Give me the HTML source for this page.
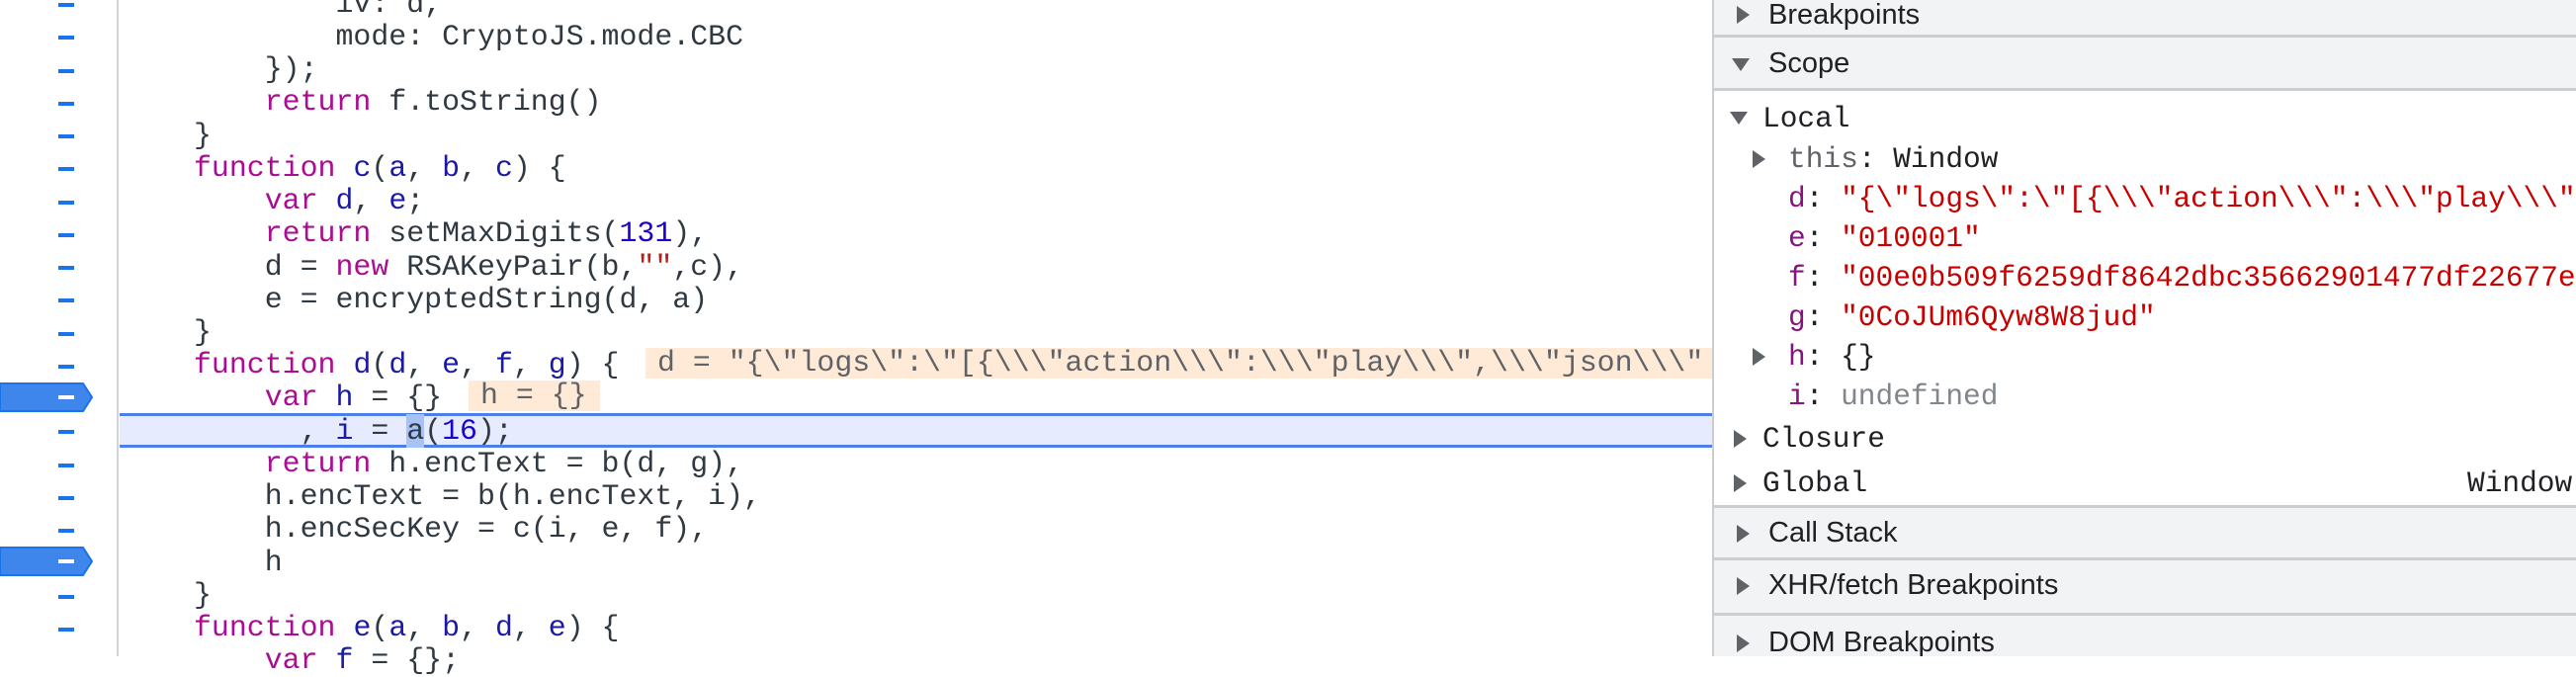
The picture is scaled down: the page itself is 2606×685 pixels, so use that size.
<!DOCTYPE html>
<html><head><meta charset="utf-8"><style>
*{margin:0;padding:0;box-sizing:border-box}
body{width:2606px;height:664px;overflow:hidden;background:#fff;position:relative;font-family:"Liberation Mono",monospace}
.gut{position:absolute;left:0;top:0;width:120px;height:664px;background:#fff;border-right:2px solid #d0d3d8}
.dash{position:absolute;left:59px;width:16px;height:4px;background:#1a73e8}
.bp{position:absolute;left:0;width:95px;height:30px}
.ln{position:absolute;left:196px;height:33px;line-height:33px;font-size:29.9px;white-space:pre;color:#303942}
.k{color:#aa0d91}.v{color:#1a1aa6}.n{color:#1c00cf}.s{color:#c41a16}
.hl{position:absolute;left:121px;width:1611px;top:418px;height:35px;background:#e6ecfd;border-top:3px solid #4b7ff0;border-bottom:3px solid #4b7ff0}
.iv{position:absolute;height:31px;background:#feead7;color:#5f6368;font-size:29.9px;line-height:31px;white-space:pre;overflow:hidden;padding-left:12px}
.panel{position:absolute;left:1732px;top:0;width:874px;height:664px;border-left:2px solid #cbcdd1;background:#fff;overflow:hidden}
.hd{position:absolute;left:0;width:874px;background:#f1f3f4;border-bottom:3px solid #cbcdd1;font-family:"Liberation Sans",sans-serif;font-size:29px;color:#202124}
.hd span{position:absolute;left:55px}
.tri{position:absolute;width:0;height:0}
.tr{border-top:9px solid transparent;border-bottom:9px solid transparent;border-left:13px solid #5f6368}
.td{border-left:9px solid transparent;border-right:9px solid transparent;border-top:13px solid #5f6368}
.sr{position:absolute;font-size:29.5px;white-space:pre;line-height:36px;color:#202124}
.p{color:#881280}.st{color:#c80000}.u{color:#80868b}
</style></head><body>
<div class="gut"></div>
<div class="hl"></div>
<div id="dashes"></div>
<svg class="bp" style="top:387px" viewBox="0 0 95 30"><path d="M0 1H84L93 15L84 29H0Z" fill="#3f86ec" stroke="#1a73e8" stroke-width="2"/><rect x="59" y="13" width="16" height="4" fill="#fff"/></svg>
<svg class="bp" style="top:553px" viewBox="0 0 95 30"><path d="M0 1H84L93 15L84 29H0Z" fill="#3f86ec" stroke="#1a73e8" stroke-width="2"/><rect x="59" y="13" width="16" height="4" fill="#fff"/></svg>

<div class="ln" style="top:-12px">        iv: d,</div>
<div class="ln" style="top:21px">        mode: CryptoJS.mode.CBC</div>
<div class="ln" style="top:54px">    });</div>
<div class="ln" style="top:87px">    <span class="k">return</span> f.toString()</div>
<div class="ln" style="top:121px">}</div>
<div class="ln" style="top:154px"><span class="k">function</span> <span class="v">c</span>(<span class="v">a</span>, <span class="v">b</span>, <span class="v">c</span>) {</div>
<div class="ln" style="top:187px">    <span class="k">var</span> <span class="v">d</span>, <span class="v">e</span>;</div>
<div class="ln" style="top:220px">    <span class="k">return</span> setMaxDigits(<span class="n">131</span>),</div>
<div class="ln" style="top:254px">    d = <span class="k">new</span> RSAKeyPair(b,<span class="s">""</span>,c),</div>
<div class="ln" style="top:287px">    e = encryptedString(d, a)</div>
<div class="ln" style="top:320px">}</div>
<div class="ln" style="top:353px"><span class="k">function</span> <span class="v">d</span>(<span class="v">d</span>, <span class="v">e</span>, <span class="v">f</span>, <span class="v">g</span>) {</div>
<div class="ln" style="top:386px">    <span class="k">var</span> <span class="v">h</span> = {}</div>
<div class="ln" style="top:420px">      , <span class="v">i</span> = <span style="background:#a8c2f7">a</span>(<span class="n">16</span>);</div>
<div class="ln" style="top:453px">    <span class="k">return</span> h.encText = b(d, g),</div>
<div class="ln" style="top:486px">    h.encText = b(h.encText, i),</div>
<div class="ln" style="top:519px">    h.encSecKey = c(i, e, f),</div>
<div class="ln" style="top:553px">    h</div>
<div class="ln" style="top:586px">}</div>
<div class="ln" style="top:619px"><span class="k">function</span> <span class="v">e</span>(<span class="v">a</span>, <span class="v">b</span>, <span class="v">d</span>, <span class="v">e</span>) {</div>
<div class="ln" style="top:652px">    <span class="k">var</span> <span class="v">f</span> = {};</div>

<div class="iv" style="left:653px;top:352px;width:1079px">d = "{\"logs\":\"[{\\\"action\\\":\\\"play\\\",\\\"json\\\"</div>
<div class="iv" style="left:474px;top:385px;width:133px">h = {}</div>

<div class="panel">
 <div class="hd" style="top:-2px;height:40px"><div class="tri tr" style="left:23px;top:8px"></div><span style="top:1px">Breakpoints</span></div>
 <div class="hd" style="top:38px;height:54px"><div class="tri td" style="left:18px;top:21px"></div><span style="top:10px">Scope</span></div>
 <div class="tri td" style="left:16px;top:113px"></div>
 <div class="sr" style="left:49px;top:102px">Local</div>
 <div class="tri tr" style="left:39px;top:152px"></div>
 <div class="sr" style="left:75px;top:143px"><span class="u" style="color:#5f6368">this</span>: Window</div>
 <div class="sr" style="left:75px;top:183px"><span class="p">d</span>: <span class="st">"{\"logs\":\"[{\\\"action\\\":\\\"play\\\"</span></div>
 <div class="sr" style="left:75px;top:223px"><span class="p">e</span>: <span class="st">"010001"</span></div>
 <div class="sr" style="left:75px;top:263px"><span class="p">f</span>: <span class="st">"00e0b509f6259df8642dbc35662901477df22677ec</span></div>
 <div class="sr" style="left:75px;top:303px"><span class="p">g</span>: <span class="st">"0CoJUm6Qyw8W8jud"</span></div>
 <div class="tri tr" style="left:39px;top:352px"></div>
 <div class="sr" style="left:75px;top:343px"><span class="p">h</span>: {}</div>
 <div class="sr" style="left:75px;top:383px"><span class="p">i</span>: <span class="u">undefined</span></div>
 <div class="tri tr" style="left:20px;top:435px"></div>
 <div class="sr" style="left:49px;top:426px">Closure</div>
 <div class="tri tr" style="left:20px;top:480px"></div>
 <div class="sr" style="left:49px;top:471px">Global</div>
 <div class="sr" style="left:762px;top:471px">Window</div>
 <div class="hd" style="top:511px;height:56px;border-top:3px solid #cbcdd1"><div class="tri tr" style="left:23px;top:17px"></div><span style="top:9px">Call Stack</span></div>
 <div class="hd" style="top:567px;height:56px"><div class="tri tr" style="left:23px;top:17px"></div><span style="top:9px">XHR/fetch Breakpoints</span></div>
 <div class="hd" style="top:623px;height:60px"><div class="tri tr" style="left:23px;top:19px"></div><span style="top:11px">DOM Breakpoints</span></div>
</div>
<script>
var h='';for(var i=0;i<20;i++){var c=5+33.25*i;h+='<div class="dash" style="top:'+(c-2)+'px"></div>';}
document.getElementById('dashes').innerHTML=h;
</script>
</body></html>
